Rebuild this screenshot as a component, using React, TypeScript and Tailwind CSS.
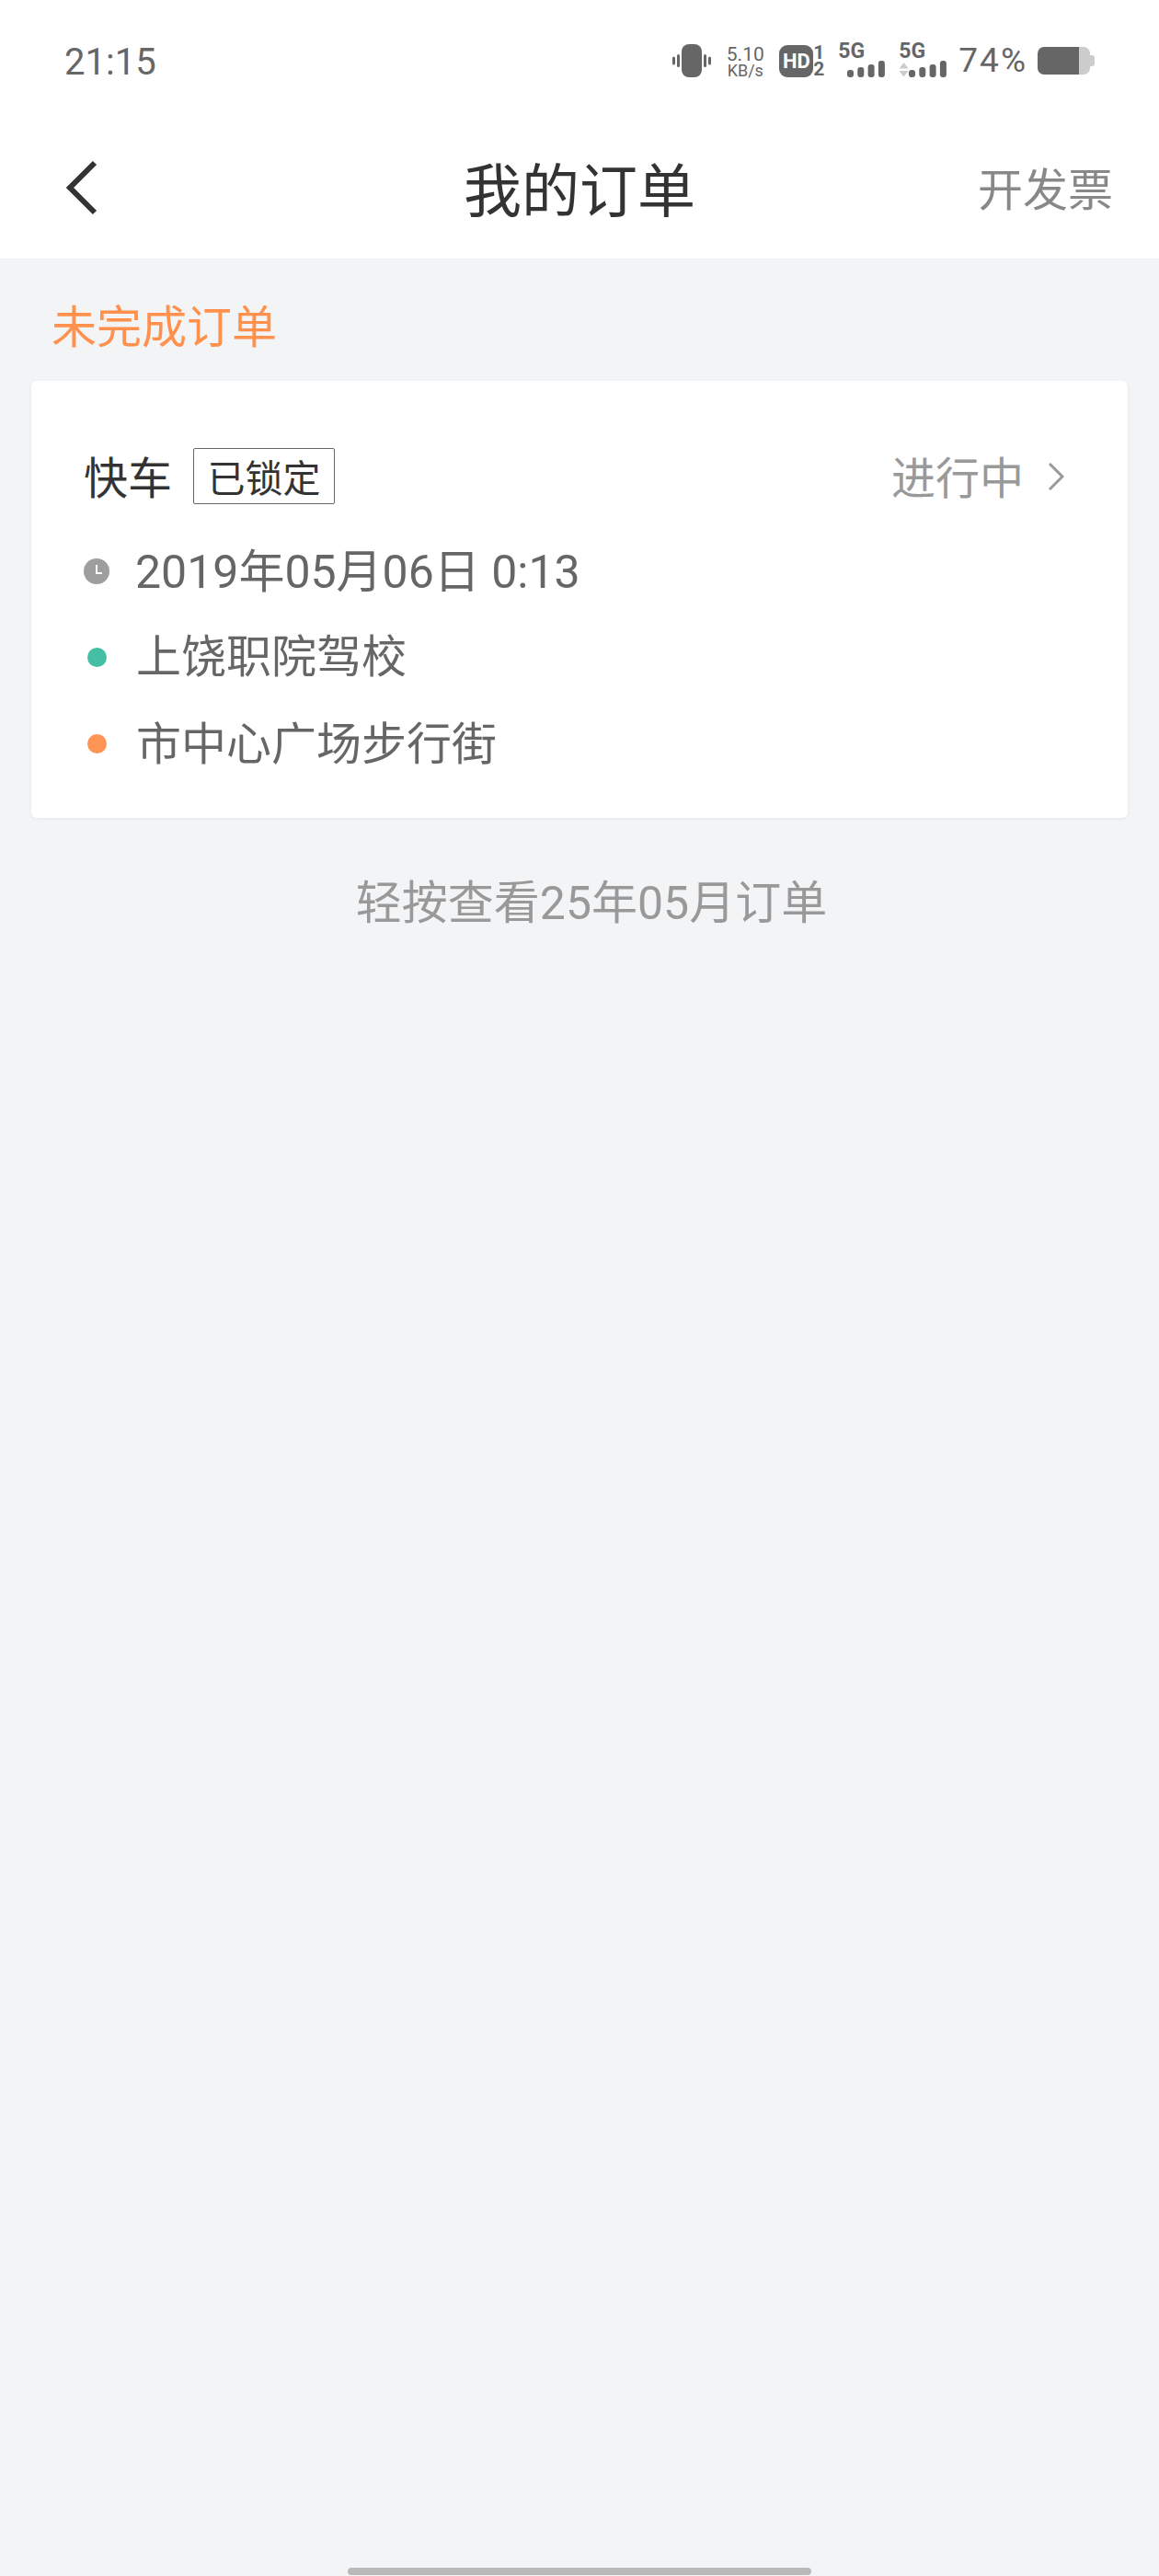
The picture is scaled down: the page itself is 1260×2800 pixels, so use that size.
import React from "react";

const F = '[font-family:"Noto_Sans_CJK_SC","Noto_Sans",sans-serif]';
const L = '[font-family:"Roboto","Noto_Sans_CJK_SC",sans-serif]';

function Vibrate() {
  return (
    <svg width="42" height="36" viewBox="0 0 42 36" fill="#666">
      <rect x="10" y="0" width="22" height="36" rx="8" />
      <rect x="5" y="11" width="3" height="14" rx="1.5" />
      <rect x="0" y="13.5" width="3" height="9" rx="1.5" />
      <rect x="34" y="11" width="3" height="14" rx="1.5" />
      <rect x="39" y="13.5" width="3" height="9" rx="1.5" />
    </svg>
  );
}

function Signal() {
  const hs = [8, 11, 14, 18];
  return (
    <svg width="41" height="18" viewBox="0 0 41 18" fill="#666">
      {hs.map((h, i) => (
        <rect key={i} x={i * 11.3} y={18 - h} width="7" height={h} rx="3" />
      ))}
    </svg>
  );
}

function Arrows() {
  return (
    <svg width="11" height="16" viewBox="0 0 11 16" fill="#ccc">
      <path d="M5.5 0L10.5 6.5H0.5Z" />
      <path d="M0.5 9H10.5L5.5 15.5Z" />
    </svg>
  );
}

function Battery() {
  return (
    <svg width="62" height="30" viewBox="0 0 62 30">
      <path d="M7 0H45V30H7a7 7 0 0 1-7-7V7a7 7 0 0 1 7-7Z" fill="#666" />
      <path d="M45 0H50a7 7 0 0 1 7 7V9h2a3 3 0 0 1 3 3v6a3 3 0 0 1-3 3H57v2a7 7 0 0 1-7 7H45Z" fill="#ccc" />
    </svg>
  );
}

export default function App() {
  return (
    <div className={`w-[1260px] h-[2800px] bg-[#f3f4f6] flex flex-col ${F}`}>
      <header className="bg-white h-[282px] shrink-0 border-b border-[#f0f0f0] flex flex-col">
        <div className="h-[136px] pl-[70px] pr-[70px] pt-[40px] flex items-start justify-between">
          <span className="text-[40px] leading-[56px] text-[#666] font-['Roboto',sans-serif]">21:15</span>
          <div className="flex items-center h-[36px] mt-[8px] font-['Roboto',sans-serif] text-[#666]">
            <Vibrate />
            <div className="ml-[16px] w-[42px] flex flex-col items-center">
              <span className="text-[21px] leading-[20px] whitespace-nowrap">5.10</span>
              <span className="text-[18px] leading-[15px] whitespace-nowrap">KB/s</span>
            </div>
            <div className="ml-[16px] flex items-center">
              <span className="bg-[#666] text-white rounded-[9px] w-[37px] h-[35px] flex items-center justify-center text-[22px] font-bold">HD</span>
              <span className="w-[12px] flex flex-col items-center text-[21px] leading-[18px] font-bold"><span>1</span><span>2</span></span>
            </div>
            <div className="ml-[15px] w-[51px] h-[36px] relative">
              <span className="absolute left-0 -top-[1px] text-[23px] leading-[18px] font-bold">5G</span>
              <span className="absolute right-0 bottom-0 flex"><Signal /></span>
            </div>
            <div className="ml-[15px] w-[52px] h-[36px] relative">
              <span className="absolute left-0 -top-[1px] text-[23px] leading-[18px] font-bold">5G</span>
              <span className="absolute left-0 bottom-0 flex"><Arrows /></span>
              <span className="absolute right-0 bottom-0 flex"><Signal /></span>
            </div>
            <span className="ml-[13px] text-[37px] leading-[40px] tracking-[2px] whitespace-nowrap">74%</span>
            <span className="ml-[11px] flex"><Battery /></span>
          </div>
        </div>
        <div className="relative flex-1 flex items-center justify-between pl-[70px] pr-[50px] -mt-[12px]">
          <svg width="36" height="60" viewBox="0 0 36 60" fill="none" stroke="#333" strokeWidth="6" className="mt-[2px]">
            <path d="M33 3L6 30L33 57" />
          </svg>
          <span className="absolute left-0 right-0 text-center text-[63px] leading-[80px] text-[#333]">我的订单</span>
          <span className="text-[49px] leading-[64px] text-[#888]">开发票</span>
        </div>
      </header>
      <div className="px-[34px] flex flex-col flex-1">
        <div className="h-[132px] pl-[22px] pt-[40px]">
          <span className="text-[49px] leading-[60px] text-[#ff914d]">未完成订单</span>
        </div>
        <section className="bg-white rounded-[6px] h-[475px] shadow-[0_1px_4px_rgba(0,0,0,0.06)] pl-[57px] pr-[69px] pt-[73px] flex flex-col">
          <div className="flex items-center justify-between h-[61px]">
            <div className="flex items-center gap-[23px]">
              <span className="text-[48px] leading-[60px] text-[#333] mb-[3px]">快车</span>
              <span className="border border-[#666] rounded-[2px] w-[154px] h-[61px] flex items-center justify-center text-[41px] text-[#333]">已锁定</span>
            </div>
            <div className="flex items-center gap-[26px]">
              <span className="text-[48px] leading-[60px] text-[#999] mb-[3px]">进行中</span>
              <svg width="18" height="32" viewBox="0 0 18 32" fill="none" stroke="#999" strokeWidth="3">
                <path d="M2 2L16 16L2 30" />
              </svg>
            </div>
          </div>
          <div className="mt-[39px] flex items-center h-[60px]">
            <svg width="28" height="28" viewBox="0 0 28 28" className="mt-[8px]">
              <circle cx="14" cy="14" r="14" fill="#9e9e9e" />
              <path d="M14 7V16H20" stroke="#fff" strokeWidth="2" fill="none" />
            </svg>
            <span className={`ml-[28px] mt-[10px] text-[50px] leading-[60px] text-[#666] ${L}`}>2019年05月06日 0:13</span>
          </div>
          <div className="mt-[33px] flex items-center h-[60px]">
            <span className="ml-[4px] mt-[8px] w-[21px] h-[21px] rounded-full bg-[#44bfa3]" />
            <span className="ml-[32px] text-[49px] leading-[60px] text-[#666]">上饶职院驾校</span>
          </div>
          <div className="mt-[35px] flex items-center h-[60px]">
            <span className="ml-[4px] mt-[6px] w-[21px] h-[21px] rounded-full bg-[#ff9457]" />
            <span className="ml-[32px] text-[49px] leading-[60px] text-[#666]">市中心广场步行街</span>
          </div>
        </section>
        <p className={`mt-[63px] pl-[26px] text-center text-[50px] leading-[60px] text-[#999] ${L}`}>轻按查看25年05月订单</p>
        <div className="flex-1 flex items-end justify-center pb-[1px]">
          <div className="w-[504px] h-[8px] rounded-full bg-[#b9b9b9]" />
        </div>
      </div>
    </div>
  );
}
